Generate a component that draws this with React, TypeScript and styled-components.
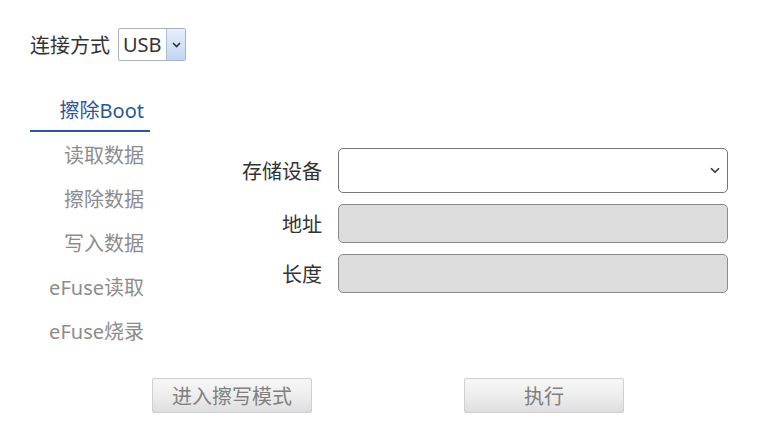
import React from "react";
import styled, { createGlobalStyle } from "styled-components";

const Global = createGlobalStyle`
  html, body { margin: 0; padding: 0; background: #fff; }
  body { font-family: "Noto Sans", "Noto Sans CJK SC", sans-serif; color: #333; }
`;

const Page = styled.div`
  width: 778px;
  height: 442px;
  box-sizing: border-box;
  padding: 28px 0 0 30px;
  display: flex;
  flex-direction: column;
`;

const TopRow = styled.div`
  display: flex;
  align-items: center;
  gap: 8px;
  height: 33px;
`;

const Label = styled.span`
  font-size: 20px;
  color: #333;
`;

const MiniSelect = styled.div`
  display: flex;
  height: 33px;
  width: 68px;
  box-sizing: border-box;
  border: 1px solid #a9b3c0;
  border-radius: 2px;
  background: #fff;
  overflow: hidden;
`;

const MiniValue = styled.div`
  flex: 1;
  display: flex;
  align-items: center;
  padding-left: 4px;
  font-size: 20px;
  color: #333;
`;

const MiniButton = styled.div`
  width: 18px;
  border-left: 1px solid #a9bfdc;
  background: linear-gradient(#e6effa, #c2d6f0);
  display: flex;
  align-items: center;
  justify-content: center;
`;

const Main = styled.div`
  display: flex;
  margin-top: 27px;
`;

const Nav = styled.nav`
  width: 120px;
  display: flex;
  flex-direction: column;
`;

const NavItem = styled.div<{ $active?: boolean }>`
  height: 44px;
  box-sizing: border-box;
  display: flex;
  align-items: center;
  justify-content: flex-end;
  padding-right: 6px;
  font-size: 20px;
  color: ${(p) => (p.$active ? "#2c5796" : "#8c8c8c")};
  border-bottom: ${(p) => (p.$active ? "2px solid #2c5796" : "none")};
`;

const Form = styled.div`
  display: grid;
  grid-template-columns: 172px 390px;
  column-gap: 16px;
  row-gap: 11px;
  align-items: center;
  align-content: start;
  padding-top: 60px;
`;

const FieldLabel = styled.label`
  font-size: 20px;
  color: #333;
  text-align: right;
`;

const SelectWrap = styled.div`
  position: relative;
  height: 45px;
`;

const Select = styled.select`
  appearance: none;
  width: 100%;
  height: 45px;
  box-sizing: border-box;
  border: 1px solid #767676;
  border-radius: 5px;
  background: #fff;
  font-size: 16px;
  font-family: inherit;
  padding: 0 8px;
`;

const Chevron = styled.svg`
  position: absolute;
  right: 8px;
  top: 19px;
  pointer-events: none;
`;

const Input = styled.input`
  height: 39px;
  box-sizing: border-box;
  border: 1px solid #8a8a8a;
  border-radius: 5px;
  background: #dcdcdc;
  font-size: 16px;
`;

const ButtonRow = styled.div`
  display: flex;
  gap: 152px;
  margin-top: 26px;
  padding-left: 122px;
`;

const Button = styled.button`
  width: 160px;
  height: 35px;
  box-sizing: border-box;
  border: 1px solid #cfcfcf;
  border-radius: 2px;
  background: linear-gradient(#f7f7f7 0%, #ededed 50%, #dedede 100%);
  font-family: "Noto Sans CJK SC", sans-serif;
  font-size: 20px;
  color: #808080;
  padding: 0;
`;

export default function App() {
  const items = ["读取数据", "擦除数据", "写入数据", "eFuse读取", "eFuse烧录"];
  return (
    <>
      <Global />
      <Page>
        <TopRow>
          <Label>连接方式</Label>
          <MiniSelect>
            <MiniValue>USB</MiniValue>
            <MiniButton>
              <svg width="9" height="6" viewBox="0 0 9 6">
                <path d="M1 1 L4.5 4.5 L8 1" stroke="#333" strokeWidth="1.6" fill="none" />
              </svg>
            </MiniButton>
          </MiniSelect>
        </TopRow>
        <Main>
          <Nav>
            <NavItem $active>擦除Boot</NavItem>
            {items.map((t) => (
              <NavItem key={t}>{t}</NavItem>
            ))}
          </Nav>
          <Form>
            <FieldLabel>存储设备</FieldLabel>
            <SelectWrap>
              <Select defaultValue="">
                <option value=""></option>
              </Select>
              <Chevron width="10" height="7" viewBox="0 0 10 7">
                <path d="M1 1.2 L5 5.2 L9 1.2" stroke="#333" strokeWidth="1.6" fill="none" />
              </Chevron>
            </SelectWrap>
            <FieldLabel>地址</FieldLabel>
            <Input disabled />
            <FieldLabel>长度</FieldLabel>
            <Input disabled />
          </Form>
        </Main>
        <ButtonRow>
          <Button>进入擦写模式</Button>
          <Button>执行</Button>
        </ButtonRow>
      </Page>
    </>
  );
}
